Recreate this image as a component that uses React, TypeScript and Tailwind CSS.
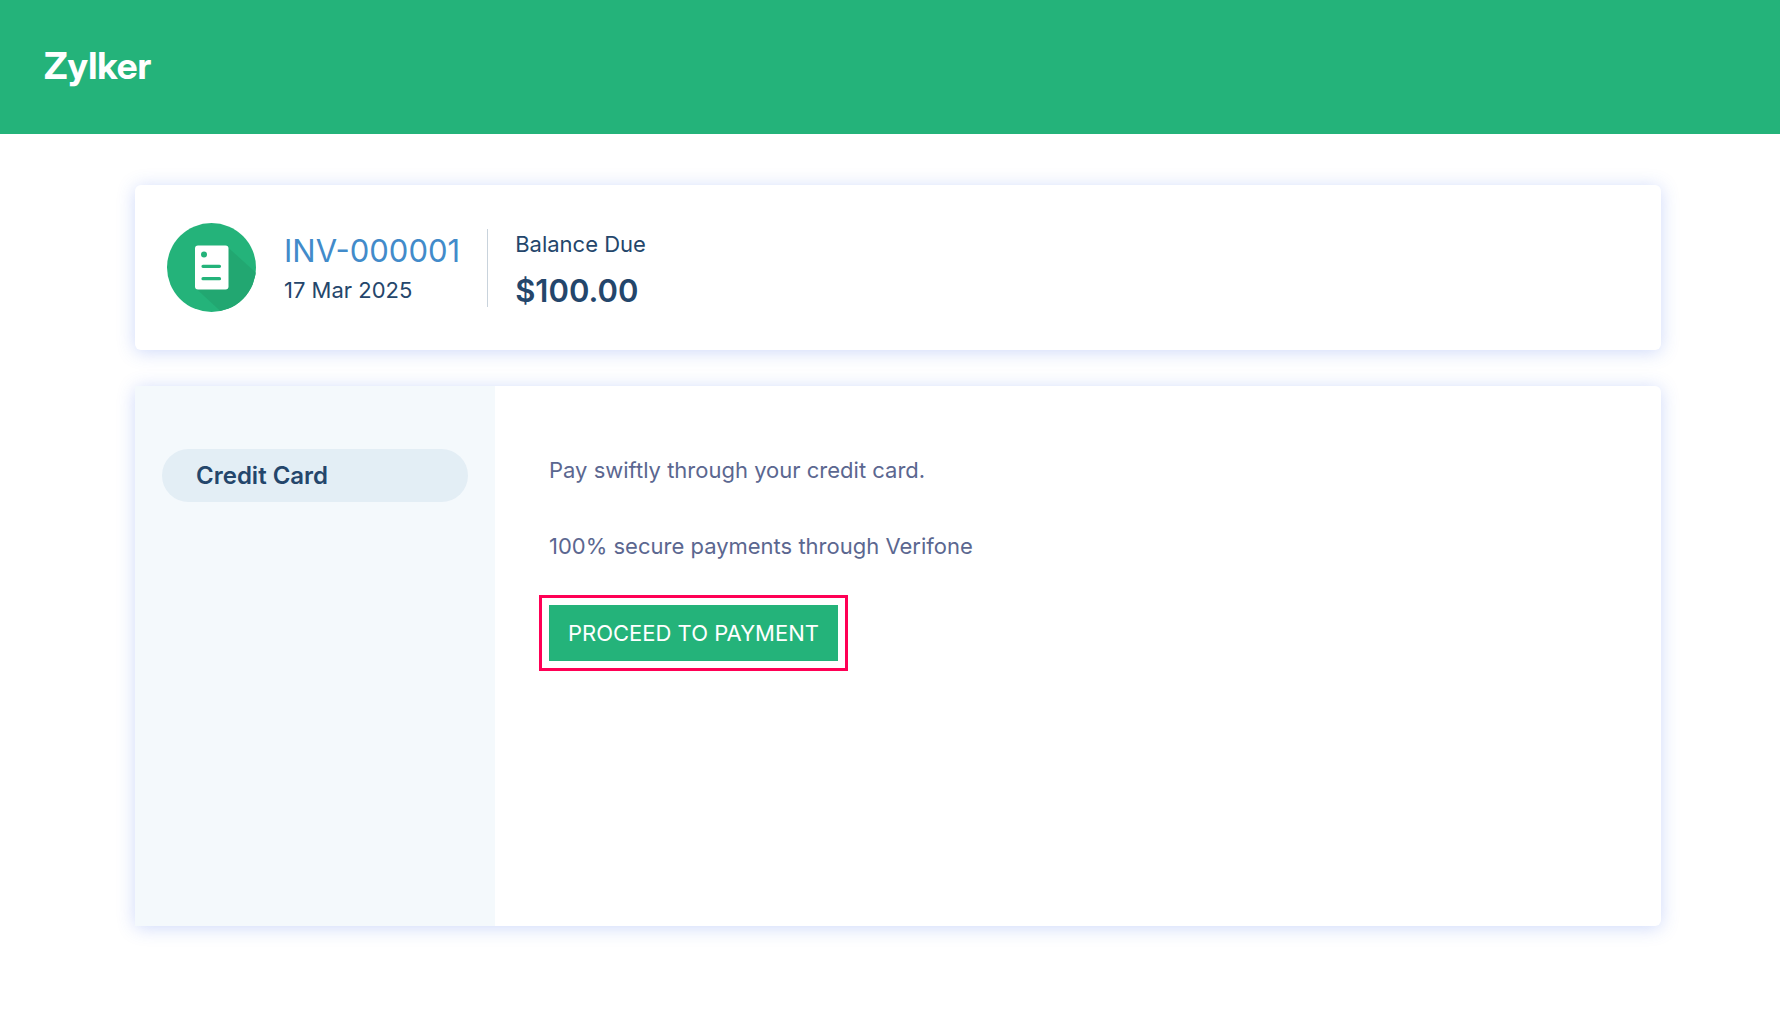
const invoice = {
  number: "INV-000001",
  date: "17 Mar 2025",
  balance: 100,
};

const cardStyle = "rounded-md bg-white shadow-[0_2px_18px_rgba(60,105,235,0.25)]";

function InvoiceIcon() {
  return (
    <svg viewBox="0 0 89 89" className="size-[89px] shrink-0" aria-hidden="true">
      <defs>
        <clipPath id="badge">
          <circle cx="44.5" cy="44.5" r="44.5" />
        </clipPath>
      </defs>
      <circle cx="44.5" cy="44.5" r="44.5" fill="#24b37a" />
      <path d="M60.5 24 L96 56 V96 H62 L29.5 66 Z" fill="#22a771" clipPath="url(#badge)" />
      <rect x="28" y="22.5" width="33.5" height="44" rx="3" fill="#fff" />
      <circle cx="37" cy="31.5" r="3" fill="#24b37a" />
      <path d="M36 43.3 H52.5 M36 55.7 H52.5" stroke="#24b37a" strokeWidth="3.2" strokeLinecap="round" />
    </svg>
  );
}

function InvoiceSummary() {
  return (
    <section className={`${cardStyle} flex items-center px-8 py-[38px]`}>
      <InvoiceIcon />
      <div className="ml-7 flex flex-col gap-[3px] pt-0.5">
        <a href="#" className="text-[31px] leading-10 text-[#428bca]">
          {invoice.number}
        </a>
        <p className="text-[22px] leading-8">{invoice.date}</p>
      </div>
      <div className="ml-[27px] flex flex-col gap-4 border-l border-[#c9d3dc] pl-[27px]">
        <p className="text-[22px] leading-[30px]">Balance Due</p>
        <p className="text-[31px] leading-8 font-semibold">${invoice.balance.toFixed(2)}</p>
      </div>
    </section>
  );
}

function PaymentPanel() {
  return (
    <section className={`${cardStyle} flex min-h-[540px]`}>
      <nav className="w-[360px] shrink-0 bg-[#f4f9fc] px-[27px] pt-[63px]">
        <button className="h-[53px] w-full rounded-full bg-[#e3eef5] pl-[34px] text-left text-2xl font-semibold">
          Credit Card
        </button>
      </nav>
      <div className="flex flex-1 flex-col items-start gap-[43px] pt-[68px] pr-8 pl-[54px] text-[22px] leading-8 text-[#5b6790]">
        <div className="flex flex-col gap-11">
          <p>Pay swiftly through your credit card.</p>
          <p>100% secure payments through Verifone</p>
        </div>
        <button className="bg-[#24b37a] px-[19px] py-3 text-white outline-3 outline-offset-7 outline-[#ff0055]">
          PROCEED TO PAYMENT
        </button>
      </div>
    </section>
  );
}

export default function App() {
  return (
    <div className="min-h-screen bg-white font-['Inter',sans-serif] text-[#24466b]">
      <header className="bg-[#24b37a] px-11 pt-[43px] pb-[45px]">
        <h1 className="font-['Inter_Display','Inter',sans-serif] text-[37px] leading-[46px] font-bold text-white">
          Zylker
        </h1>
      </header>
      <main className="flex flex-col gap-9 pt-[51px] pr-[119px] pb-12 pl-[135px]">
        <InvoiceSummary />
        <PaymentPanel />
      </main>
    </div>
  );
}
